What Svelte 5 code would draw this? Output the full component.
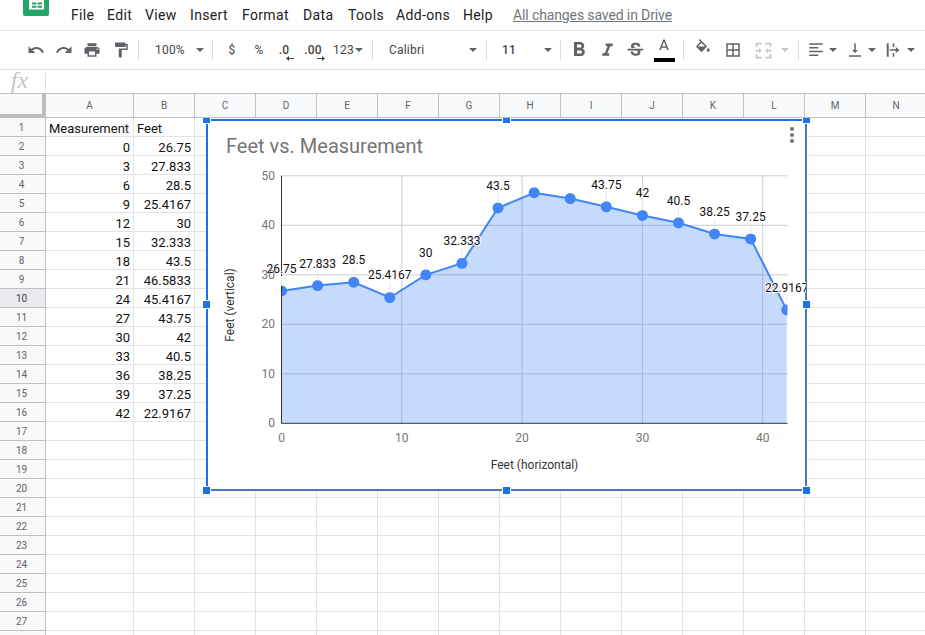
<script>
  const cols = [['A',88],['B',61],['C',61],['D',61],['E',61],['F',61],['G',61],['H',61],['I',61],['J',61],['K',61],['L',61],['M',61],['N',61]];
  const data = [[0,'26.75',26.75],[3,'27.833',27.833],[6,'28.5',28.5],[9,'25.4167',25.4167],[12,'30',30],[15,'32.333',32.333],[18,'43.5',43.5],[21,'46.5833',46.5833],[24,'45.4167',45.4167],[27,'43.75',43.75],[30,'42',42],[33,'40.5',40.5],[36,'38.25',38.25],[39,'37.25',37.25],[42,'22.9167',22.9167]];
  const rows = Array.from({length:28},(_,i)=>i+1);
  const menus = [['File',36],['Edit',38],['View',45],['Insert',52],['Format',61],['Data',45],['Tools',48],['Add-ons',67],['Help',50]];
  const px = v => 75.5 + v * 12.03;
  const py = v => 304.3 - v * 4.95;
  const hidden = new Set(['46.5833','45.4167']);
  const pts = data.map(d => [px(d[0]), py(d[2])]);
  const linePts = pts.map(p => p.join(',')).join(' ');
  const areaPts = `${px(0)},${py(0)} ${linePts} ${px(42)},${py(0)}`;
  const ic = {
    undo:'M12.5 8c-2.65 0-5.05.99-6.9 2.6L2 7v9h9l-3.62-3.62c1.39-1.16 3.16-1.88 5.12-1.88 3.54 0 6.55 2.31 7.6 5.5l2.37-.78C21.08 11.03 17.15 8 12.5 8z',
    redo:'M18.4 10.6C16.55 8.99 14.15 8 11.5 8c-4.65 0-8.58 3.03-9.96 7.22L3.9 16c1.05-3.19 4.05-5.5 7.6-5.5 1.95 0 3.73.72 5.12 1.88L13 16h9V7l-3.6 3.6z',
    print:'M19 8H5c-1.66 0-3 1.34-3 3v6h4v4h12v-4h4v-6c0-1.66-1.34-3-3-3zm-3 11H8v-5h8v5zm3-7c-.55 0-1-.45-1-1s.45-1 1-1 1 .45 1 1-.45 1-1 1zm-1-9H6v4h12V3z',
    paint:'M18 4V3c0-.55-.45-1-1-1H5c-.55 0-1 .45-1 1v4c0 .55.45 1 1 1h12c.55 0 1-.45 1-1V6h1v4H9v11c0 .55.45 1 1 1h2c.55 0 1-.45 1-1v-9h8V4h-3z',
    bold:'M15.6 10.79c.97-.67 1.65-1.77 1.65-2.79 0-2.26-1.75-4-4-4H7v14h7.04c2.09 0 3.71-1.7 3.71-3.79 0-1.52-.86-2.82-2.15-3.42zM10 6.5h3c.83 0 1.5.67 1.5 1.5s-.67 1.5-1.5 1.5h-3v-3zm3.5 9H10v-3h3.5c.83 0 1.5.67 1.5 1.5s-.67 1.5-1.5 1.5z',
    italic:'M10 4v3h2.21l-3.42 8H6v3h8v-3h-2.21l3.42-8H18V4z',
    strike:'M7.24 8.75c-.26-.48-.39-1.03-.39-1.67 0-.61.13-1.16.4-1.67.26-.5.63-.93 1.11-1.29.48-.35 1.05-.63 1.7-.83.66-.19 1.39-.29 2.18-.29.81 0 1.54.11 2.21.34.66.22 1.23.54 1.69.94.47.4.83.88 1.08 1.43.25.55.38 1.15.38 1.81h-3.01c0-.31-.05-.59-.15-.85-.09-.27-.24-.49-.44-.68-.2-.19-.45-.33-.75-.44-.3-.1-.66-.16-1.06-.16-.39 0-.74.04-1.03.13-.29.09-.53.21-.72.36-.19.16-.34.34-.44.55-.1.21-.15.43-.15.66 0 .48.25.88.74 1.21.38.25.77.48 1.41.7H7.39c-.05-.08-.11-.17-.15-.25zM21 12v-2H3v2h9.62c.18.07.4.14.55.2.37.17.66.34.87.51.21.17.35.36.43.57.07.2.11.43.11.69 0 .23-.05.45-.14.66-.09.2-.23.38-.42.53-.19.15-.42.26-.71.35-.29.08-.63.13-1.01.13-.43 0-.83-.04-1.18-.13s-.66-.23-.91-.42c-.25-.19-.45-.44-.59-.75-.14-.31-.25-.76-.25-1.21H6.4c0 .55.08 1.13.24 1.58.16.45.37.85.65 1.21.28.35.6.66.98.92.37.26.78.48 1.22.65.44.17.9.3 1.38.39.48.08.96.13 1.44.13.8 0 1.53-.09 2.18-.28s1.21-.45 1.67-.79c.46-.34.82-.77 1.07-1.27s.38-1.07.38-1.71c0-.6-.1-1.14-.31-1.61-.05-.11-.11-.23-.17-.33H21z',
    color:'M11 2L5.500 16h2.250l1.120-3h6.250l1.120 3h2.250L13 2h-2zm-1.380 9L12 4.670 14.380 11H9.620z',
    fill:'M16.56 8.94L7.62 0 6.21 1.41l2.38 2.38-5.15 5.15c-.59.59-.59 1.54 0 2.12l5.5 5.5c.29.29.68.44 1.06.44s.77-.15 1.06-.44l5.5-5.5c.59-.58.59-1.53 0-2.12zM5.21 10L10 5.21 14.79 10H5.21zM19 11.5s-2 2.17-2 3.5c0 1.1.9 2 2 2s2-.9 2-2c0-1.33-2-3.5-2-3.5z',
    borders:'M3 3v18h18V3H3zm8 16H5v-6h6v6zm0-8H5V5h6v6zm8 8h-6v-6h6v6zm0-8h-6V5h6v6z',
    merge:'M3 3h7v2H5v3H3V3zm11 0h7v5h-2V5h-5V3zM3 16h2v3h5v2H3v-5zm16 0h2v5h-7v-2h5v-3zM3 11h4V9l3 3-3 3v-2H3v-2zm18 0v2h-4v2l-3-3 3-3v2h4z',
    align:'M3 3h18v2H3V3zm0 5h12v2H3V8zm0 5h18v2H3v-2zm0 5h12v2H3v-2z',
    valign:'M16 12h-3V3h-2v9H8l4 4 4-4zM4 19v2h16v-2H4z',
    wrap:'M5 3h2.600v18H5V3zm8 0h2v5h-2V3zm0 13h2v5h-2v-5zM9 11h8V8l5 4-5 4v-3H9v-2z'
  };
</script>

<div class="page">
  <div class="menubar">
    <svg class="logo" viewBox="0 0 26 16"><path class="lg" d="M0 0h26v14a2 2 0 0 1-2 2H2a2 2 0 0 1-2-2z"/><path class="lw" d="M6 0h15v9.500H6z"/><path class="lg" d="M9 2.500h4.500v2H9zM14.500 2.500h4.500v2h-4.500zM9 5.800h4.500v2H9zM14.500 5.800h4.500v2h-4.500z"/></svg>
    <nav class="menus">
      {#each menus as m}<span class="menu" style="width:{m[1]}px">{m[0]}</span>{/each}
      <span class="saved">All changes saved in Drive</span>
    </nav>
  </div>

  <div class="toolbar">
    <button class="w28"><svg viewBox="0 0 24 24"><path d={ic.undo}/></svg></button>
    <button class="w28"><svg viewBox="0 0 24 24"><path d={ic.redo}/></svg></button>
    <button class="w28"><svg viewBox="0 0 24 24"><path d={ic.print}/></svg></button>
    <button class="w29"><svg viewBox="0 0 24 24"><path d={ic.paint}/></svg></button>
    <i class="sep m3"></i>
    <span class="drop zoomd"><b class="t">100%</b><em class="caret"></em></span>
    <i class="sep"></i>
    <span class="t sq d1">$</span>
    <span class="t sq d2">%</span>
    <span class="t sq d3">.0<svg class="arr a1" viewBox="0 0 8 5"><path d="M0 2.500L3 0v2h5v1H3v2z"/></svg></span>
    <span class="t sq d4">.00<svg class="arr a2" viewBox="0 0 8 5"><path d="M8 2.500L5 0v2H0v1h5v2z"/></svg></span>
    <span class="t sq d5">123</span>
    <em class="caret"></em>
    <i class="sep m9"></i>
    <span class="drop font"><b class="t">Calibri</b><em class="caret"></em></span>
    <i class="sep"></i>
    <span class="drop size"><b class="t">11</b><em class="caret"></em></span>
    <i class="sep"></i>
    <button class="w29 ml3 big"><svg viewBox="0 0 24 24"><path d={ic.bold}/></svg></button>
    <button class="w28 mid"><svg viewBox="0 0 24 24"><path d={ic.italic}/></svg></button>
    <button class="w28 mid"><svg viewBox="0 0 24 24"><path d={ic.strike}/></svg></button>
    <button class="w30 colorbtn"><svg viewBox="0 0 24 24"><path d={ic.color}/></svg><u></u></button>
    <i class="sep m4"></i>
    <button class="w38 up"><svg viewBox="0 0 24 24"><path d={ic.fill}/></svg></button>
    <button class="w22"><svg viewBox="0 0 24 24"><path d={ic.borders}/></svg></button>
    <button class="w38 off mid"><svg viewBox="0 0 24 24"><path d={ic.merge}/></svg></button>
    <em class="caret off cm"></em>
    <i class="sep m9"></i>
    <button class="w34"><svg viewBox="0 0 24 24"><path d={ic.align}/></svg></button>
    <em class="caret c4"></em>
    <button class="w36"><svg viewBox="0 0 24 24"><path d={ic.valign}/></svg></button>
    <em class="caret c5"></em>
    <button class="w32"><svg viewBox="0 0 24 24"><path d={ic.wrap}/></svg></button>
    <em class="caret cm"></em>
  </div>

  <div class="formula">
    <span class="fx">fx</span>
    <i class="fsep"></i>
  </div>

  <div class="sheet">
    <div class="head">
      <div class="corner"></div>
      {#each cols as c}<div class="ch" style="width:{c[1]}px">{c[0]}</div>{/each}
    </div>
    {#each rows as r}
      <div class="row">
        <div class="rh" class:sel={r===10}>{r}</div>
        {#each cols as c, i}
          <div class="cell" class:num={r>1} style="width:{c[1]}px">
            {#if r===1 && i===0}Measurement{:else if r===1 && i===1}Feet{:else if r>1 && r<=16 && i===0}{data[r-2][0]}{:else if r>1 && r<=16 && i===1}{data[r-2][1]}{/if}
          </div>
        {/each}
      </div>
    {/each}

    <div class="chart">
      <svg class="plot" width="600" height="372" viewBox="0 0 600 372">
        <defs><clipPath id="pc"><rect x="75.5" y="50" width="506" height="260"/></clipPath></defs>
        <text class="title" x="20" y="34">Feet vs. Measurement</text>
        <g class="dots"><circle cx="586" cy="10" r="2"/><circle cx="586" cy="16" r="2"/><circle cx="586" cy="22" r="2"/></g>
        {#each [10,20,30,40,50] as v}<line class="grid" x1="75.5" x2="581.5" y1={py(v)} y2={py(v)}/>{/each}
        {#each [10,20,30,40] as v}<line class="grid" x1={px(v)} x2={px(v)} y1={py(50)} y2={py(0)}/>{/each}
        <g clip-path="url(#pc)">
          <polygon class="area" points={areaPts}/>
          <polyline class="ln" points={linePts}/>
          {#each pts as p}<circle class="pt" cx={p[0]} cy={p[1]} r="5.5"/>{/each}
        </g>
        <line class="axis" x1="75.5" x2="75.5" y1={py(50)} y2={py(0)}/>
        <line class="axis" x1="75.5" x2="581.5" y1={py(0)} y2={py(0)}/>
        {#each data as d, i}
          {#if !hidden.has(d[1])}
            <line class="lead" x1={pts[i][0]} x2={pts[i][0]} y1={pts[i][1]-15} y2={pts[i][1]-5}/>
            <text class="lbl" x={pts[i][0]} y={pts[i][1]-18} text-anchor="middle">{d[1]}</text>
          {/if}
        {/each}
        {#each [0,10,20,30,40,50] as v}<text class="tick" x="69" y={py(v)+4} text-anchor="end">{v}</text>{/each}
        {#each [0,10,20,30,40] as v}<text class="tick" x={px(v)} y="323" text-anchor="middle">{v}</text>{/each}
        <text class="atitle" x="328.5" y="350" text-anchor="middle">Feet (horizontal)</text>
        <text class="atitle" transform="translate(28 186) rotate(-90)" text-anchor="middle">Feet (vertical)</text>
      </svg>
      <i class="h tl"></i><i class="h tm"></i><i class="h tr"></i>
      <i class="h ml"></i><i class="h mr"></i>
      <i class="h bl"></i><i class="h bm"></i><i class="h br"></i>
    </div>
  </div>
</div>

<style>
  :global(body) { margin: 0; background: #fff; overflow: hidden; }
  .page { width: 925px; height: 635px; overflow: hidden; font-family: Roboto, "Liberation Sans", sans-serif; color: #222; }

  .menubar { height: 30px; border-bottom: 1px solid #e0e0e0; display: flex; }
  .logo { display: block; width: 26px; height: 16px; margin-left: 23px; flex: none; }
  .lg { fill: #23a566; }
  .lw { fill: #fff; }
  .menus { display: flex; align-items: center; margin-left: 22px; height: 29px; font-size: 14px; }
  .menu { display: block; letter-spacing: .35px; }
  .saved { color: #70757a; text-decoration: underline; font-size: 14px; letter-spacing: -.12px; }

  .toolbar { height: 38px; border-bottom: 1px solid #e0e0e0; display: flex; align-items: center; padding-left: 22px; }
  .toolbar button { border: 0; padding: 0; background: none; height: 24px; display: flex; align-items: center; justify-content: center; flex: none; }
  .toolbar svg { width: 18px; height: 18px; fill: #5f6368; display: block; }
  .toolbar .off svg { fill: #c4c6c8; }
  .toolbar .big svg { width: 24px; height: 24px; }
  .toolbar .mid svg { width: 21px; height: 21px; }
  .up svg { margin-top: -5px; }
  .w22 { width: 22px; } .w28 { width: 28px; } .w29 { width: 29px; } .w30 { width: 30px; }
  .w32 { width: 32px; } .w34 { width: 34px; } .w36 { width: 36px; } .w38 { width: 38px; }
  .ml3 { margin-left: 3px; }
  .sep { display: block; width: 1px; height: 20px; background: #dadce0; flex: none; }
  .m3 { margin-left: 3px; } .m4 { margin-left: 4px; } .m9 { margin-left: 9px; }
  .t { font-size: 12px; font-weight: 400; color: #444; letter-spacing: .2px; }
  .drop { display: flex; align-items: center; justify-content: space-between; box-sizing: border-box; flex: none; }
  .zoomd { width: 73px; padding: 0 8px 0 16px; }
  .font { width: 113px; padding: 0 9px 0 16px; }
  .size { width: 73px; padding: 0 8px 0 15px; }
  .size .t { font-weight: 500; }
  .caret { display: block; width: 0; height: 0; border: 4px solid transparent; border-top-color: #5f6368; border-bottom: 0; flex: none; }
  .caret.off { border-top-color: #c4c6c8; }
  .sq { display: block; text-align: center; flex: none; position: relative; }
  .d1 { width: 38px; } .d2 { width: 16px; } .d3 { width: 34px; font-weight: 500; } .d4 { width: 24px; font-weight: 500; }
  .d5 { width: 22px; margin-left: 8px; text-align: left; }
  .toolbar .arr { position: absolute; width: 8px; height: 5px; top: 13px; fill: #444; }
  .a1 { left: 19px; }
  .a2 { left: 16px; }
  .cm { margin-left: -1px; }
  .c4 { margin-left: -4px; }
  .c5 { margin-left: -5px; }
  .colorbtn { position: relative; }
  .colorbtn u { position: absolute; left: 5px; bottom: 0; width: 21px; height: 4px; background: #000; }
  .colorbtn svg { margin-top: -7px; }

  .formula { height: 23px; border-bottom: 1px solid #c0c0c0; display: flex; align-items: center; }
  .fx { width: 45px; text-align: center; font: italic 24px "Liberation Serif", serif; color: #c6c6c6; box-sizing: border-box; padding-right: 6px; margin-top: -3px; }
  .fsep { display: block; width: 1px; height: 17px; background: #dadce0; }

  .sheet { position: relative; font-family: Roboto, "Liberation Sans", sans-serif; font-size: 13px; }
  .head { display: flex; height: 24px; position: relative; z-index: 2; }
  .corner { width: 46px; height: 24px; box-sizing: border-box; background: #f8f9fa; border-right: 4px solid #bdbdbd; border-bottom: 4px solid #bdbdbd; flex: none; }
  .ch { box-sizing: border-box; flex: none; height: 24px; line-height: 23px; text-align: center; background: #f8f9fa; border-right: 1px solid #c0c0c0; border-bottom: 1px solid #c0c0c0; font-size: 10px; color: #5f6368; }
  .row { display: flex; height: 19px; }
  .rh { width: 46px; flex: none; box-sizing: border-box; height: 19px; line-height: 20px; text-align: center; background: #f8f9fa; border-right: 1px solid #c0c0c0; border-bottom: 1px solid #c0c0c0; font-size: 10px; color: #5f6368; padding-right: 2px; overflow: hidden; }
  .rh.sel { background: #e8eaed; color: #444; }
  .cell { box-sizing: border-box; flex: none; height: 19px; line-height: 21px; border-right: 1px solid #e2e3e3; border-bottom: 1px solid #e2e3e3; padding: 0 3px; white-space: nowrap; overflow: hidden; color: #111; }
  .num { text-align: right; }

  .chart { position: absolute; left: 206px; top: 25px; width: 601px; height: 372px; background: #fff; box-shadow: inset 2px 0 0 #1a73e8, inset 0 2px 0 #1a73e8, inset -2px 0 0 #4a78b8, inset 0 -2px 0 #4a78b8; }
  .plot { display: block; position: absolute; left: 0; top: 0; font-family: Roboto, "Liberation Sans", sans-serif; }
  .title { font-size: 20px; fill: #757575; }
  .dots circle { fill: #757575; }
  .grid { stroke: #ccc; stroke-width: 1; }
  .area { fill: #4285f4; fill-opacity: .3; }
  .ln { fill: none; stroke: #4285f4; stroke-width: 2; }
  .pt { fill: #4285f4; }
  .axis { stroke: #333; stroke-width: 1; }
  .tick { font-size: 12px; fill: #757575; }
  .atitle { font-size: 12px; fill: #333; }
  .lbl { font-size: 12px; fill: #111; paint-order: stroke; stroke: #fff; stroke-width: 2px; stroke-linejoin: round; }
  .lead { stroke: #e8e8e8; stroke-width: 1; }

  .h { position: absolute; width: 7px; height: 7px; background: #1a73e8; border: 1px solid #fff; margin: -4px 0 0 -4px; }
  .tl { left: 0; top: 0; } .tm { left: 300px; top: 0; } .tr { left: 600px; top: 0; }
  .ml { left: 0; top: 185px; } .mr { left: 600px; top: 185px; }
  .bl { left: 0; top: 371px; } .bm { left: 300px; top: 371px; } .br { left: 600px; top: 371px; }
</style>
